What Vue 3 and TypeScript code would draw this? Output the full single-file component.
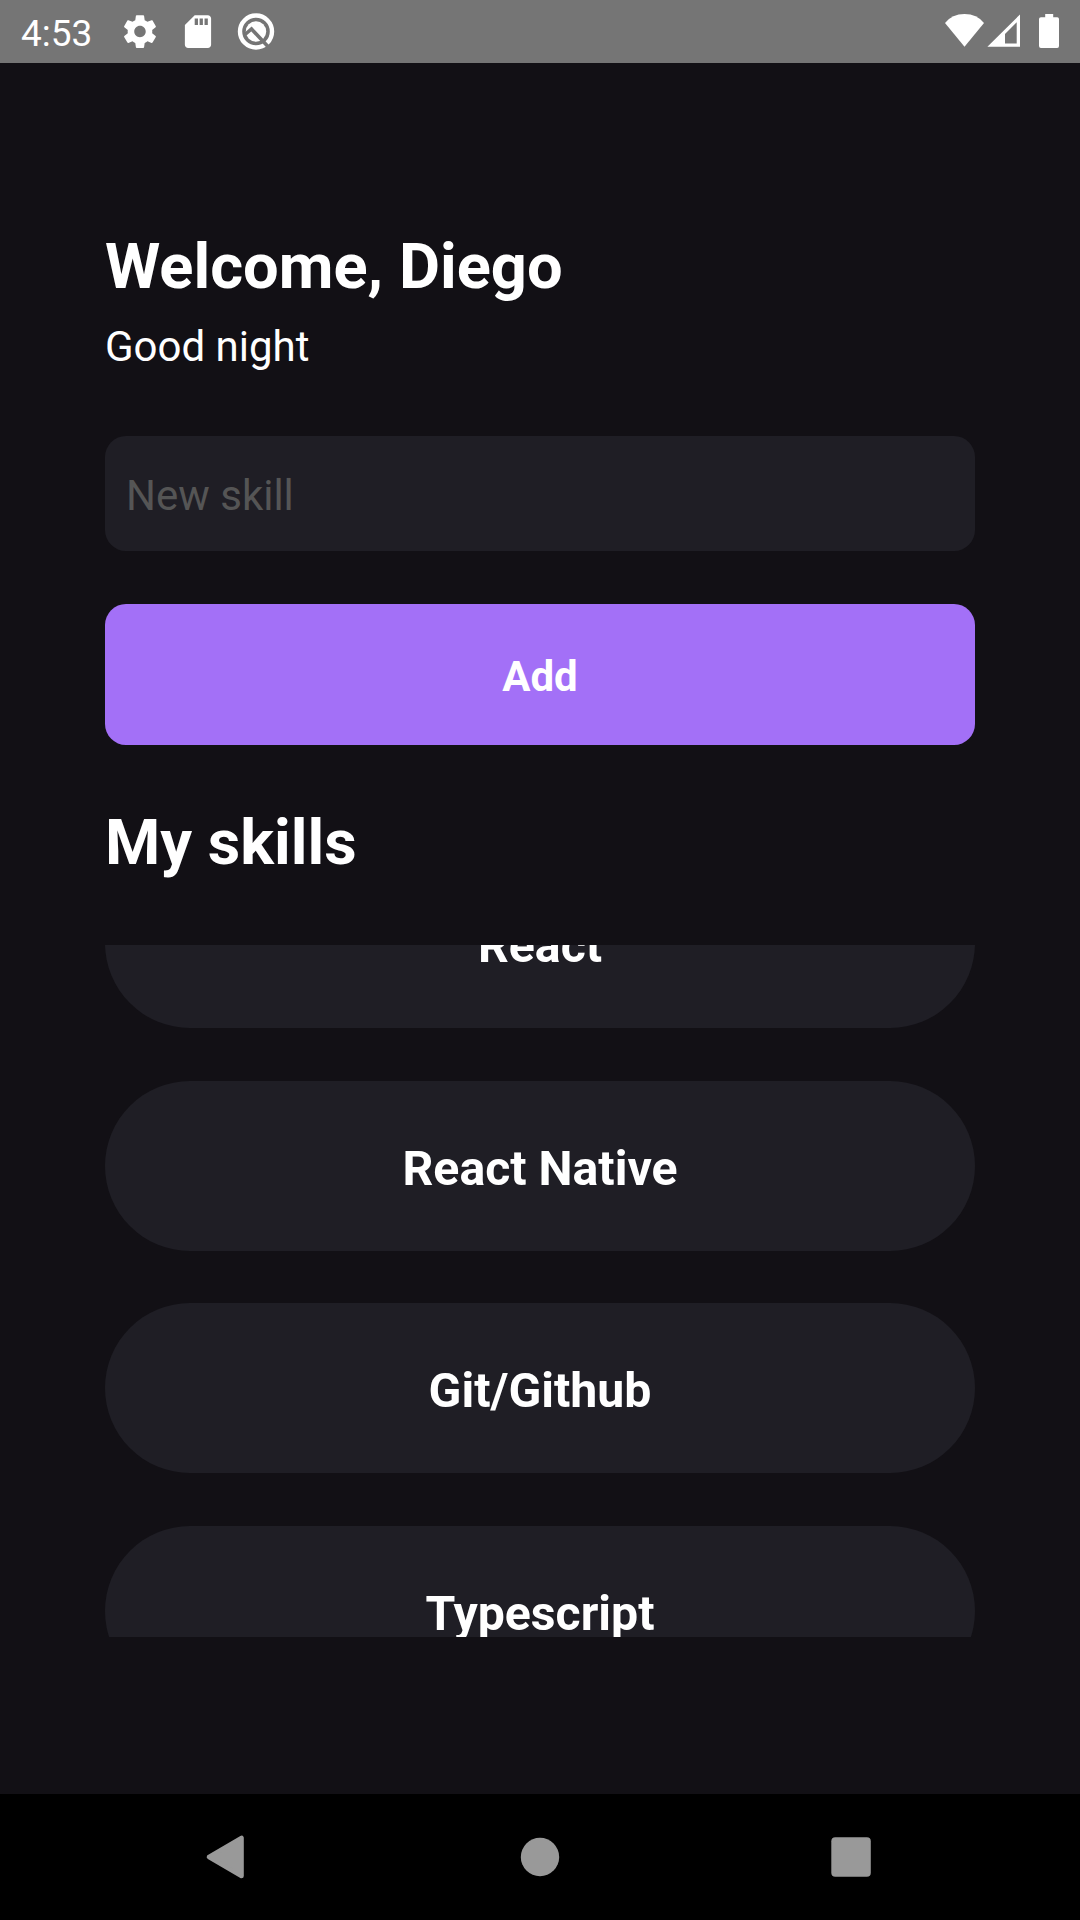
<script setup lang="ts">
import { ref } from 'vue'

const username = 'Diego'
const greeting = 'Good night'
const newSkill = ref('')
const skills = ref<string[]>(['React', 'React Native', 'Git/Github', 'Typescript'])

function addSkill(): void {
  const name = newSkill.value.trim()
  if (name) {
    skills.value.push(name)
    newSkill.value = ''
  }
}
</script>

<template>
  <div class="screen">
    <header class="status">
      <span class="clock">4:53</span>
      <svg class="status-left" width="160" height="63" viewBox="120 0 160 63" fill="#fff">
        <path
          transform="translate(120.3 11.9) scale(1.64)"
          d="M19.43 12.98c.04-.32.07-.64.07-.98s-.03-.66-.07-.98l2.11-1.65c.19-.15.24-.42.12-.64l-2-3.46c-.12-.22-.39-.3-.61-.22l-2.49 1c-.52-.4-1.08-.73-1.69-.98l-.38-2.65C14.46 2.18 14.25 2 14 2h-4c-.25 0-.46.18-.49.42l-.38 2.65c-.61.25-1.17.59-1.69.98l-2.49-1c-.23-.09-.49 0-.61.22l-2 3.46c-.13.22-.07.49.12.64l2.11 1.65c-.04.32-.07.65-.07.98s.03.66.07.98l-2.11 1.65c-.19.15-.24.42-.12.64l2 3.46c.12.22.39.3.61.22l2.49-1c.52.4 1.08.73 1.69.98l.38 2.65c.03.24.24.42.49.42h4c.25 0 .46-.18.49-.42l.38-2.65c.61-.25 1.17-.59 1.69-.98l2.49 1c.23.09.49 0 .61-.22l2-3.46c.12-.22.07-.49-.12-.64l-2.11-1.65zM12 15.5c-1.93 0-3.5-1.57-3.5-3.5s1.57-3.5 3.5-3.5 3.5 1.57 3.5 3.5-1.57 3.5-3.5 3.5z"
        />
        <path
          transform="translate(178.3 11.9) scale(1.64)"
          d="M18 2h-8L4.02 8 4 20c0 1.1.9 2 2 2h12c1.1 0 2-.9 2-2V4c0-1.1-.9-2-2-2zm-6 6h-2V4h2v4zm3 0h-2V4h2v4zm3 0h-2V4h2v4z"
        />
        <circle cx="256" cy="31.5" r="16" fill="none" stroke="#fff" stroke-width="4.4" />
        <circle cx="256" cy="31.5" r="10.2" />
        <path d="M245 34.500L251.500 29L270 48.800" fill="none" stroke="#757575" stroke-width="3.6" />
      </svg>
      <svg class="status-right" width="120" height="63" viewBox="940 0 120 63" fill="#fff">
        <path d="M945 23Q952 14 964.5 14T984 23L964.5 46.7Z" />
        <path fill-rule="evenodd" d="M987.4 46.7L1020 14.4V46.7ZM1005 43.5H1016.7V22.3L1005 34Z" />
        <path d="M1045.200 14H1053.200V17.200H1057.200Q1059 17.200 1059 19V46Q1059 48 1057.200 48H1041Q1039 48 1039 46V19Q1039 17.200 1041 17.200H1045.200Z" />
      </svg>
    </header>

    <main class="content">
      <h1 class="title">Welcome, {{ username }}</h1>
      <p class="greeting">{{ greeting }}</p>
      <input v-model="newSkill" class="field" type="text" placeholder="New skill" />
      <button class="add" type="button" @click="addSkill">Add</button>
      <h2 class="title skills-title">My skills</h2>
      <div class="list">
        <button v-for="skill in skills" :key="skill" class="skill" type="button">{{ skill }}</button>
      </div>
    </main>

    <nav class="nav">
      <svg width="1080" height="126" viewBox="0 1794 1080 126" fill="#999">
        <path d="M209 1857L241.500 1838V1876Z" stroke="#999" stroke-width="4.600" stroke-linejoin="round" />
        <circle cx="540" cy="1857" r="19.200" />
        <rect x="831.300" y="1837.200" width="39.500" height="39.500" rx="4" />
      </svg>
    </nav>
  </div>
</template>

<style>
body {
  background: #121015;
}
</style>

<style scoped>
.screen {
  box-sizing: border-box;
  display: flex;
  flex-direction: column;
  width: 1080px;
  height: 1920px;
  overflow: hidden;
  background: #121015;
  color: #fff;
  font-family: Roboto, sans-serif;
}

.status {
  display: flex;
  flex: none;
  height: 63px;
  background: #757575;
}

.clock {
  width: 99px;
  padding-left: 21px;
  font-size: 37px;
  line-height: 68px;
}

.status-right {
  margin-left: auto;
  margin-right: 20px;
}

.content {
  display: flex;
  flex: 1;
  flex-direction: column;
  min-height: 0;
  padding: 161px 105px 157px;
}

.title {
  flex: none;
  margin: 0;
  font-size: 63.2px;
  font-weight: 700;
  line-height: 84px;
}

.greeting {
  margin: 11px 0 0;
  font-size: 42px;
  font-weight: 400;
  line-height: 56px;
}

.field {
  box-sizing: border-box;
  flex: none;
  height: 115px;
  margin: 61px 0 0;
  padding: 3px 21px 0;
  border: 0;
  border-radius: 21px;
  outline: 0;
  background: #1f1e25;
  color: #fff;
  font: 400 42px Roboto, sans-serif;
}

.field::placeholder {
  color: #555;
  opacity: 1;
}

.add {
  flex: none;
  height: 141px;
  margin: 53px 0 0;
  padding: 3px 0 0;
  border: 0;
  border-radius: 21px;
  background: #a370f7;
  color: #fff;
  font: 700 42px Roboto, sans-serif;
}

.skills-title {
  margin-top: 55px;
}

.list {
  display: flex;
  flex: 1;
  flex-direction: column;
  justify-content: flex-end;
  gap: 52.6px;
  min-height: 0;
  margin-top: 61px;
  overflow: hidden;
}

.skill {
  flex: none;
  height: 170px;
  padding: 5px 0 0;
  border: 0;
  border-radius: 85px;
  background: #1f1e25;
  color: #fff;
  font: 700 48.2px Roboto, sans-serif;
}

.skill:last-child {
  margin-bottom: -59px;
}

.nav {
  display: flex;
  flex: none;
  height: 126px;
  background: #000;
}
</style>
